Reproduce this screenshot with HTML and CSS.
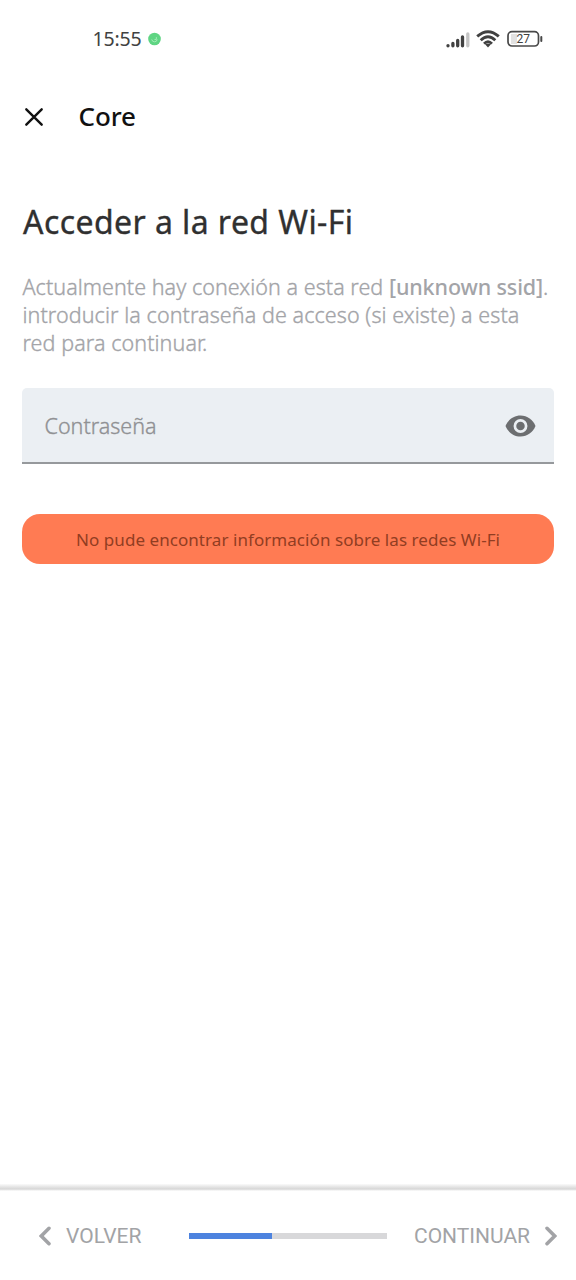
FILE: index.html
```html
<!DOCTYPE html>
<html lang="es">
<head>
<meta charset="utf-8">
<title>Core</title>
<link rel="stylesheet" href="styles.css">
</head>
<body>
<div class="screen">
  <div class="status">
    <span class="clock">15:55</span>
    <svg class="call" viewBox="0 0 14 14"><circle cx="7" cy="7" r="6.8" fill="#5fd583"/><path d="M4 7.5Q4.500 10 7 10T10 7.500M7 7.500H9V5" fill="none" stroke="#a5edb9" stroke-width="1"/></svg>
    <svg class="signal" viewBox="0 0 24 16"><g stroke-width="3.300" stroke-linecap="round" stroke="#414141"><path d="M2 13.600V13.800M6.900 11.500V13.800M11.700 8.500V13.800M16.500 5V13.800"/><path d="M21.800 2V13.800" stroke="#c4c4c4"/></g></svg>
    <svg class="wifi" viewBox="0 0 24 18"><g fill="none" stroke="#414141" stroke-width="2.900"><path d="M1.200 6.400Q12 -3 22.800 6.400M4.700 10.200Q12 3.500 19.300 10.200M8.100 13.700Q12 9.600 15.900 13.700"/></g><path d="M9.300 14.500Q12 12.600 14.700 14.500L12 17.500Z" fill="#414141"/></svg>
    <svg class="battery" viewBox="0 0 36 18"><rect x="4" y="4" width="6" height="10" fill="#e2e2e2"/><rect x="1" y="1.700" width="30.500" height="14.300" rx="4" fill="none" stroke="#484848" stroke-width="1.700"/><path d="M34.300 7V11" stroke="#484848" stroke-width="2" stroke-linecap="round"/><text x="16.300" y="13.200" text-anchor="middle" class="charge">27</text></svg>
  </div>
  <header class="appbar">
    <svg class="close" viewBox="0 0 20 20"><path d="M2.300 2.300L17.700 17.700M17.700 2.300L2.300 17.700" stroke="#111" stroke-width="2.400" stroke-linecap="round"/></svg>
    <span class="title">Core</span>
  </header>
  <main class="content">
    <h1 class="heading">Acceder a la red Wi-Fi</h1>
    <p class="copy"><span class="line line-a">Actualmente hay conexión a esta red <b>[unknown ssid]</b>.</span><span class="line">introducir la contraseña de acceso (si existe) a esta</span><span class="line">red para continuar.</span></p>
    <div class="field">
      <span class="placeholder">Contraseña</span>
      <svg class="eye" viewBox="0 0 30 22"><path d="M15 .5C8.200 .5 2.400 4.800 0 11C2.400 17.200 8.200 21.500 15 21.500S27.600 17.200 30 11C27.600 4.800 21.800 .5 15 .5Z" fill="#6c6e70"/><circle cx="15" cy="11" r="5.600" fill="#6c6e70" stroke="#ebeff3" stroke-width="2.700"/></svg>
    </div>
    <div class="alert"><span class="alert-text">No pude encontrar información sobre las redes Wi-Fi</span></div>
  </main>
  <footer class="footer">
    <svg class="chevron" viewBox="0 0 12 20"><path d="M10 2.300L2.300 10L10 17.700" fill="none" stroke="#a2a3a6" stroke-width="3.500" stroke-linecap="round"/></svg>
    <span class="back">VOLVER</span>
    <div class="track"><div class="bar"></div></div>
    <span class="next">CONTINUAR</span>
    <svg class="chevron" viewBox="0 0 12 20"><path d="M2 2.300L9.700 10L2 17.700" fill="none" stroke="#a2a3a6" stroke-width="3.500" stroke-linecap="round"/></svg>
  </footer>
</div>
</body>
</html>
```
FILE: styles.css
```css
* { box-sizing: border-box; }
body { margin: 0; background: #fff; font-family: "Noto Sans", "Open Sans", sans-serif; white-space: nowrap; }
.screen { width: 576px; height: 1280px; display: flex; flex-direction: column; overflow: hidden; background: #fff; }
.status { height: 77px; display: flex; align-items: center; padding-left: 92.500px; }
.clock { width: 55.500px; font-size: 19.500px; color: #414141; letter-spacing: -0.200px; }
.call { width: 13px; height: 14px; }
.signal { width: 24px; height: 16px; margin-left: 285px; margin-top: 2px; }
.wifi { width: 24px; height: 18px; margin-left: 6px; }
.battery { width: 36px; height: 18px; margin-left: 7px; }
.charge { font: 12px Roboto, sans-serif; fill: #414141; }
.appbar { height: 78px; display: flex; align-items: center; padding: 1px 0 0 24px; }
.close { width: 20px; height: 20px; margin-right: 34.500px; }
.title { font-size: 26px; line-height: 36px; margin-top: -1px; font-weight: 500; color: #111; letter-spacing: -0.100px; }
.content { flex: 1; padding: 44.500px 22px 0 22px; }
.heading { margin: 0 0 0 1px; font-size: 32px; line-height: 44px; font-weight: 400; letter-spacing: 0.430px; color: #303030; -webkit-text-stroke: 0.350px #303030; }
.copy { margin: 29.500px 0 31px 0.500px; font-size: 21.500px; line-height: 28px; font-weight: 300; letter-spacing: 0.080px; color: #a3a4a8; -webkit-text-stroke: 0.350px #a3a4a8; }
.line { display: block; }
.line-a { letter-spacing: 0.050px; }
.copy b { font-weight: 500; letter-spacing: -0.120px; -webkit-text-stroke: 0; }
.field { height: 76px; display: flex; align-items: center; justify-content: space-between; padding: 0 18px 0 22.500px; background: #ebeff3; border-bottom: 2px solid #96999c; border-radius: 5px 5px 0 0; }
.placeholder { font-size: 21.500px; font-weight: 300; color: #909194; -webkit-text-stroke: 0.350px #909194; }
.eye { width: 31px; height: 22px; margin-top: 1px; }
.alert { height: 50px; margin-top: 50px; border-radius: 18px; background: #ff7b53; display: flex; align-items: center; justify-content: center; }
.alert-text { font-size: 17px; letter-spacing: 0.060px; color: #913d22; }
.footer { height: 96px; display: flex; align-items: center; padding: 7px 19px 0 39px; background: linear-gradient(#fafafa, #e4e4e4 3px, #d6d6d6 5px, #fff 7px); color: #a2a3a6; font-family: Roboto, sans-serif; font-size: 21px; }
.chevron { width: 12px; height: 20px; }
.back { width: 77px; margin-left: 15px; }
.track { width: 198px; height: 6px; margin-left: 46px; background: #d8d8da; }
.bar { width: 42%; height: 6px; background: #4d83df; }
.next { width: 117px; margin: 0 14px 0 27px; }
```
